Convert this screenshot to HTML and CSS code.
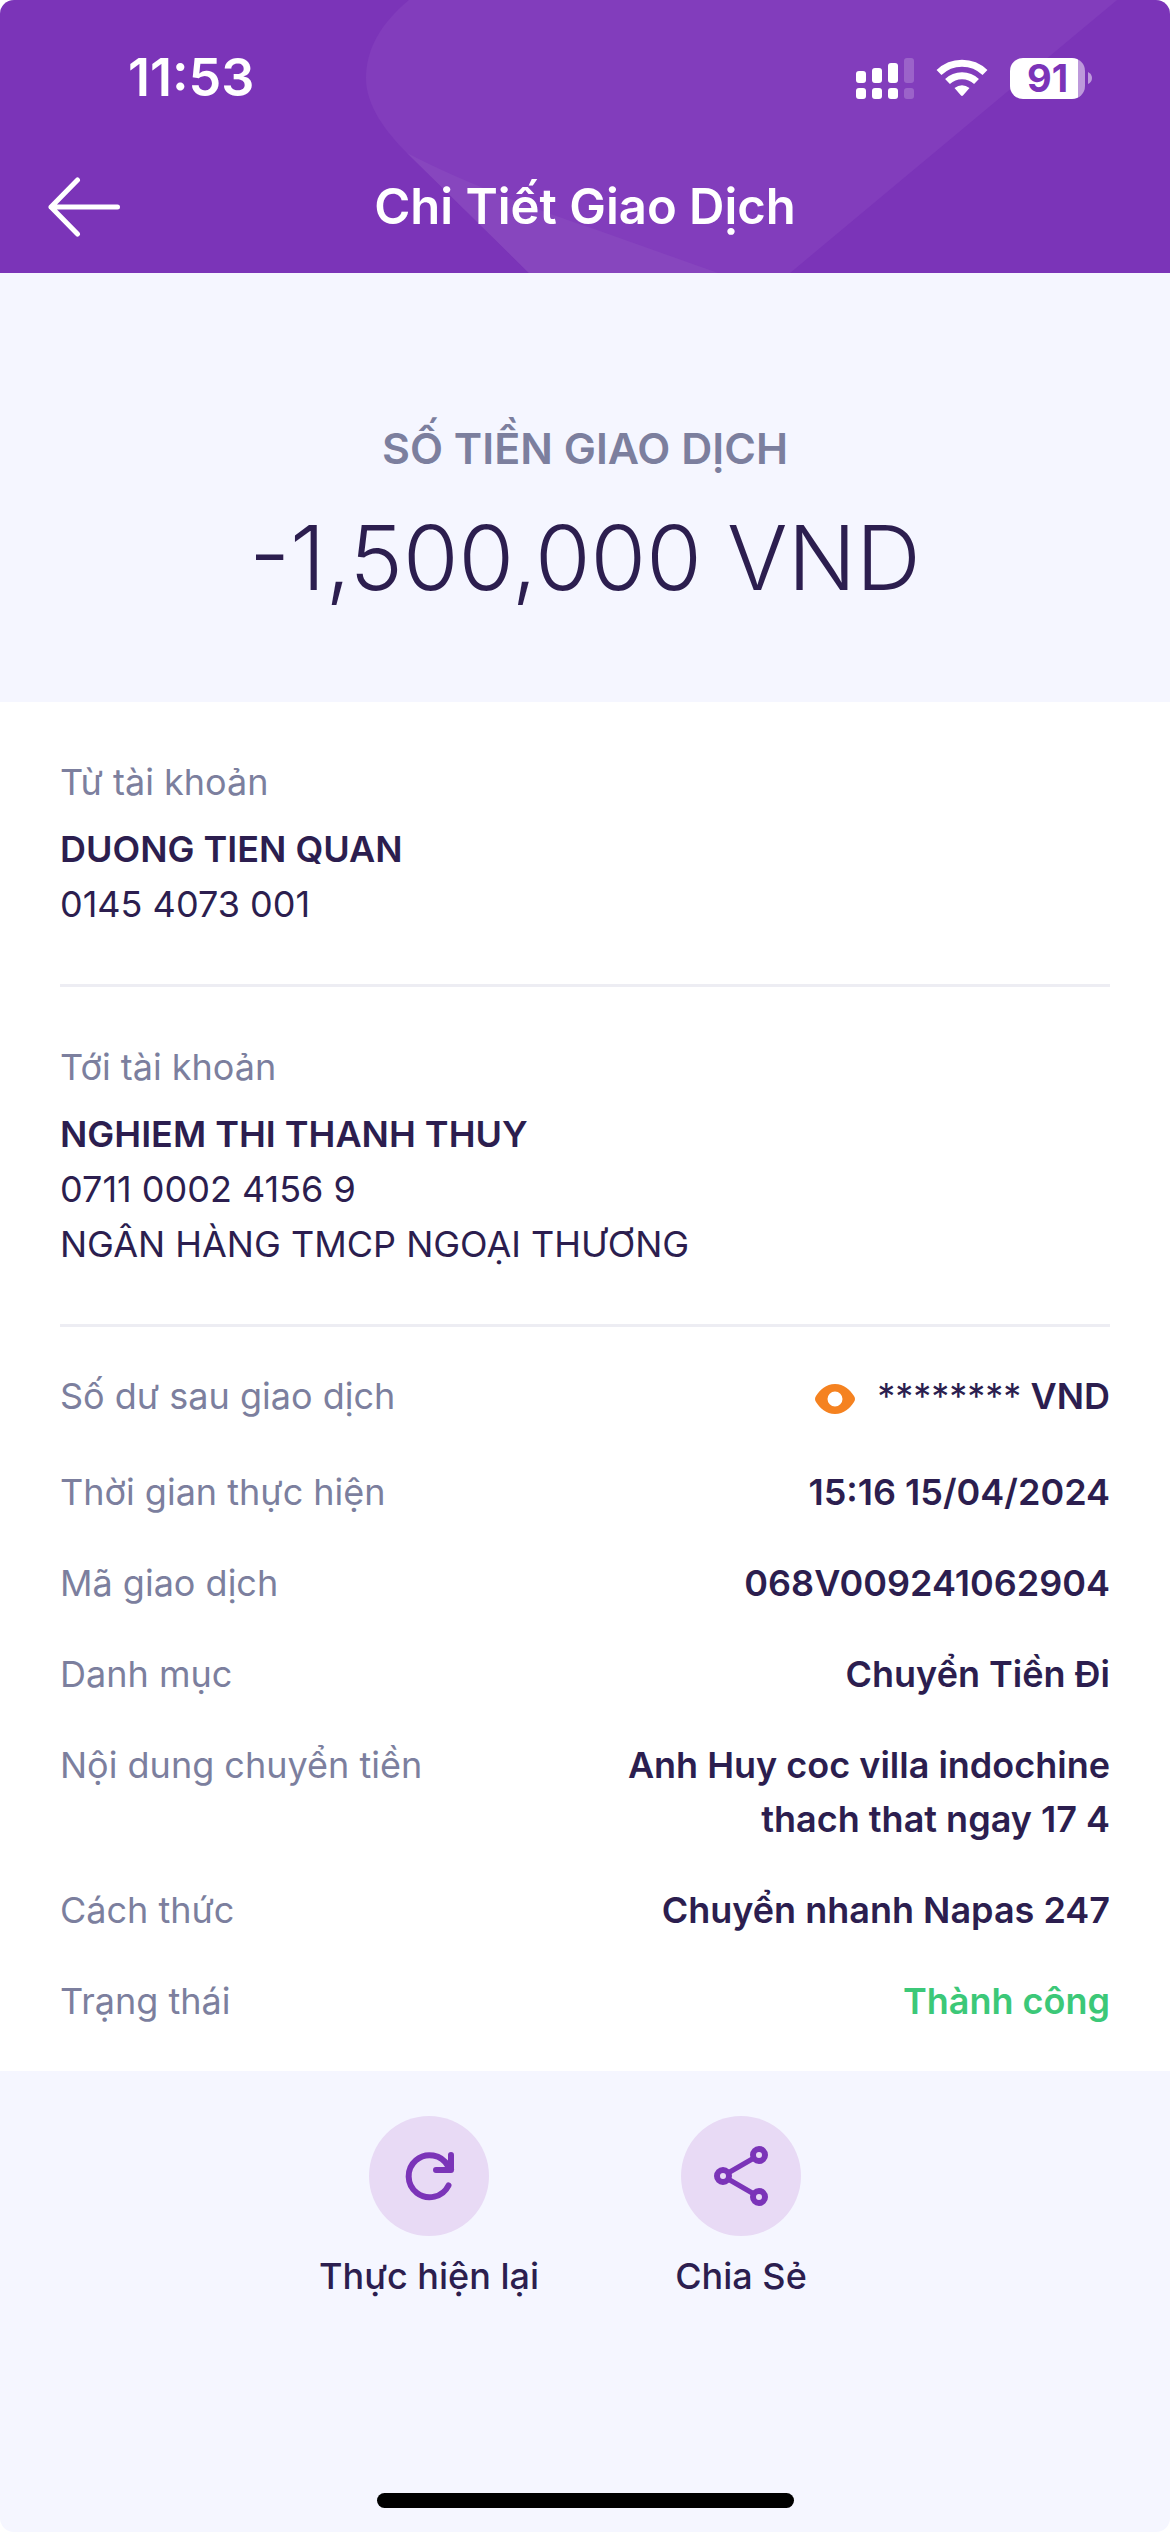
FILE: index.html
```html
<!DOCTYPE html>
<html lang="vi">
<head>
<meta charset="utf-8">
<meta name="viewport" content="width=device-width, initial-scale=1">
<title>Chi Tiết Giao Dịch</title>
<link rel="stylesheet" href="styles.css">
</head>
<body>
<div class="screen">
  <header class="header">
    <svg class="header-art" viewBox="0 0 1170 273" preserveAspectRatio="none" aria-hidden="true">
      <path d="M409 0C380 24 366 50 366 78C366 106 386 132 407 153L529 273H790L1117 0Z" fill="#823dbc"/>
      <path d="M407 153L529 273H718L597 230Q478 190 407 153Z" fill="#8746be"/>
    </svg>
    <div class="status">
      <span class="time">11:53</span>
      <div class="status-icons">
        <svg width="58" height="41" viewBox="0 0 58 41" fill="#fff" aria-hidden="true">
          <rect x="0" y="13" width="10" height="12" rx="3"/>
          <rect x="16" y="10" width="10" height="15" rx="3"/>
          <rect x="32" y="5" width="10" height="20" rx="3"/>
          <rect x="48" y="0" width="10" height="25" rx="3" opacity=".2"/>
          <rect x="0" y="30" width="10" height="11" rx="3"/>
          <rect x="16" y="30" width="10" height="11" rx="3"/>
          <rect x="32" y="30" width="10" height="11" rx="3"/>
          <rect x="48" y="30" width="10" height="11" rx="3" opacity=".2"/>
        </svg>
        <svg class="wifi" width="52" height="38" viewBox="0 0 52 38" aria-hidden="true">
          <g fill="none" stroke="#fff" stroke-width="7">
            <path d="M3 13.500A33 33 0 0 1 49 13.500"/>
            <path d="M11.500 22.500A21 21 0 0 1 40.500 22.500"/>
          </g>
          <path d="M18.500 29Q26 23.500 33.500 29L27.200 36.300Q26 37.800 24.800 36.300Z" fill="#fff"/>
        </svg>
        <div class="battery">
          <span class="battery-level">91</span>
          <svg class="battery-tip" width="4" height="12" viewBox="0 0 4 12" aria-hidden="true"><path d="M0 0Q4 2 4 6Q4 10 0 12Z" fill="#fff" opacity=".5"/></svg>
        </div>
      </div>
    </div>
    <nav class="nav">
      <button class="back" type="button" aria-label="Quay lại">
        <svg width="72" height="60" viewBox="0 0 72 60" fill="none" stroke="#fff" stroke-width="5" stroke-linecap="round" stroke-linejoin="round" aria-hidden="true"><path d="M29.500 3L3 30L29.500 57M3 30H69.500"/></svg>
      </button>
      <h1 class="title">Chi Tiết Giao Dịch</h1>
    </nav>
  </header>

  <main>
    <section class="summary">
      <h2 class="summary-label">SỐ TIỀN GIAO DỊCH</h2>
      <p class="amount">-1,500,000 VND</p>
    </section>

    <div class="card">
      <section class="account">
        <h3 class="account-label">Từ tài khoản</h3>
        <p class="account-name">DUONG TIEN QUAN</p>
        <p>0145 4073 001</p>
      </section>
      <section class="account">
        <h3 class="account-label">Tới tài khoản</h3>
        <p class="account-name">NGHIEM THI THANH THUY</p>
        <p>0711 0002 4156 9</p>
        <p>NGÂN HÀNG TMCP NGOẠI THƯƠNG</p>
      </section>
      <dl class="details">
        <div class="row">
          <dt>Số dư sau giao dịch</dt>
          <dd class="balance">
            <button class="reveal" type="button" aria-label="Hiện số dư">
              <svg width="40" height="30" viewBox="0 0 40 30" aria-hidden="true"><path fill="#f58220" fill-rule="evenodd" d="M20 0C29 0 35 6 39 12Q41 15 39 18C35 24 29 30 20 30S5 24 1 18Q-1 15 1 12C5 6 11 0 20 0ZM20 7.500A7.500 7.500 0 1 0 20 22.500A7.500 7.500 0 1 0 20 7.500Z"/></svg>
            </button>
            <span><span class="mask">********</span> VND</span>
          </dd>
        </div>
        <div class="row"><dt>Thời gian thực hiện</dt><dd>15:16 15/04/2024</dd></div>
        <div class="row"><dt>Mã giao dịch</dt><dd>068V009241062904</dd></div>
        <div class="row"><dt>Danh mục</dt><dd>Chuyển Tiền Đi</dd></div>
        <div class="row"><dt>Nội dung chuyển tiền</dt><dd>Anh Huy coc villa indochine thach that ngay 17 4</dd></div>
        <div class="row"><dt>Cách thức</dt><dd>Chuyển nhanh Napas 247</dd></div>
        <div class="row"><dt>Trạng thái</dt><dd class="success">Thành công</dd></div>
      </dl>
    </div>
  </main>

  <div class="actions">
    <button class="action" type="button">
      <span class="action-icon">
        <svg width="120" height="120" viewBox="0 0 120 120" fill="none" stroke="#7b34b8" stroke-width="6" stroke-linecap="round" stroke-linejoin="round" aria-hidden="true"><path d="M79.500 69.500A21 21 0 1 1 79 50L82 53.500M82 39V54H67"/></svg>
      </span>
      Thực hiện lại
    </button>
    <button class="action" type="button">
      <span class="action-icon">
        <svg width="120" height="120" viewBox="0 0 120 120" fill="none" stroke="#7b34b8" stroke-width="6" aria-hidden="true"><circle cx="42" cy="60" r="6"/><circle cx="78" cy="39" r="6"/><circle cx="78" cy="81" r="6"/><path d="M47 57L73 42M47 63L73 78" stroke-width="5"/></svg>
      </span>
      Chia Sẻ
    </button>
  </div>
  <div class="home-indicator"></div>
</div>
</body>
</html>
```
FILE: styles.css
```css
* {
  box-sizing: border-box;
}

body {
  margin: 0;
  background: #fff;
  color: #2c1e4f;
  font-family: Inter, "Noto Sans", sans-serif;
  font-size: 36px;
  line-height: 54px;
}

h1, h2, h3, p, dl, dd {
  margin: 0;
  font-size: inherit;
  font-weight: inherit;
}

button {
  padding: 0;
  border: 0;
  background: none;
  color: inherit;
  font: inherit;
  cursor: pointer;
}

svg {
  display: block;
}

.screen {
  display: flex;
  flex-direction: column;
  min-height: 100vh;
  border-radius: 14px;
  background: #f5f6ff;
  overflow: hidden;
}

/* Header */

.header {
  position: relative;
  padding-bottom: 15px;
  background: #7b34b8;
  color: #fff;
}

.header-art {
  position: absolute;
  inset: 0;
  width: 100%;
  height: 100%;
}

.status {
  position: relative;
  display: flex;
  align-items: center;
  justify-content: space-between;
  height: 156px;
  padding: 0 78px 0 128px;
}

.time {
  font-size: 52px;
  font-weight: 600;
}

.status-icons {
  display: flex;
  align-items: center;
  gap: 22px;
}

.battery {
  display: flex;
  align-items: center;
  gap: 3px;
}

.battery-level {
  width: 75px;
  border-radius: 13px;
  background: linear-gradient(90deg, #fff 68px, #bd99db 68px);
  color: #7b34b8;
  font-size: 38px;
  font-weight: 700;
  line-height: 41px;
  text-align: center;
}

.nav {
  position: relative;
  display: grid;
  grid-template-columns: 72px 1fr 72px;
  align-items: center;
  height: 102px;
  padding: 0 48px;
}

.title {
  font-size: 49px;
  font-weight: 600;
  text-align: center;
}

/* Amount */

.summary {
  display: flex;
  flex-direction: column;
  gap: 29px;
  padding: 148px 60px 90px;
  text-align: center;
}

.summary-label {
  color: #7c7f9e;
  font-size: 43px;
  font-weight: 600;
}

.amount {
  font-size: 90px;
  font-weight: 300;
  line-height: 108px;
}

/* Accounts and details */

.card {
  padding: 0 60px;
  background: #fff;
}

.account {
  padding: 53px 0 52px;
  border-bottom: 3px solid #ededf3;
  line-height: 55px;
}

.account-label {
  margin-bottom: 12px;
  color: #7c7f9e;
}

.account-name {
  font-weight: 600;
}

.details {
  display: flex;
  flex-direction: column;
  gap: 37px;
  padding: 42px 0 43px;
}

.row {
  display: flex;
  justify-content: space-between;
  gap: 60px;
}

.row dt {
  flex: none;
  color: #7c7f9e;
}

.row dd {
  max-width: 500px;
  font-weight: 600;
  text-align: right;
}

.row .balance {
  display: flex;
  gap: 22px;
}

.mask {
  font-weight: 400;
}

.reveal {
  display: flex;
  align-items: center;
  height: 59px;
}

.row .success {
  color: #3cc878;
}

/* Actions */

.actions {
  display: flex;
  justify-content: center;
  padding: 45px 0;
}

.action {
  display: flex;
  flex-direction: column;
  align-items: center;
  gap: 13px;
  width: 312px;
  font-weight: 500;
}

.action-icon {
  border-radius: 50%;
  background: #e8daf5;
}

.home-indicator {
  width: 417px;
  height: 15px;
  margin: auto auto 24px;
  border-radius: 8px;
  background: #000;
}
```
